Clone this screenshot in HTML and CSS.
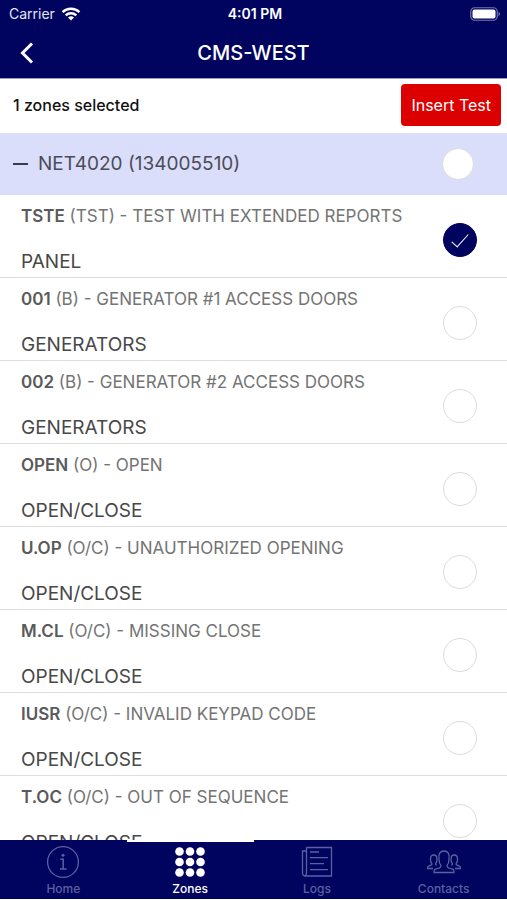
FILE: index.html
```html
<!DOCTYPE html>
<html lang="en">
<head>
<meta charset="utf-8">
<meta name="viewport" content="width=device-width, initial-scale=1">
<title>CMS-WEST</title>
<link rel="stylesheet" href="styles.css">
</head>
<body>
<div class="app">
  <header class="header">
    <div class="status">
      <div class="carrier"><span>Carrier</span>
        <svg width="20" height="14" viewBox="0 0 20 14" fill="none" stroke="#fff" stroke-width="2.4"><path d="M1.6 5.2a12 12 0 0 1 16.8 0M4.7 8.4a7.6 7.6 0 0 1 10.6 0"/><path d="M10 13.6l-3-3a4.3 4.3 0 0 1 6 0z" fill="#fff" stroke="none"/></svg>
      </div>
      <span class="time">4:01 PM</span>
      <svg class="battery" width="31" height="14" viewBox="0 0 31 14"><rect x=".75" y=".75" width="26.5" height="12.5" rx="4" fill="none" stroke="#7476ad" stroke-width="1.2"/><rect x="2.5" y="2.5" width="23" height="9" rx="2" fill="#fff"/><path d="M28.5 5v4q1.6-.6 1.6-2t-1.6-2z" fill="#7476ad"/></svg>
    </div>
    <div class="titlebar">
      <button class="back" type="button" aria-label="Back"><svg width="14" height="22" viewBox="0 0 14 22" fill="none" stroke="#fff" stroke-width="3"><path d="M12 1.5L2.5 11 12 20.5"/></svg></button>
      <h1>CMS-WEST</h1>
    </div>
  </header>
  <div class="toolbar">
    <span>1 zones selected</span>
    <button class="insert" type="button">Insert Test</button>
  </div>
  <main class="list">
    <div class="group">
      <span class="minus"></span>
      <label for="g">NET4020 (134005510)</label>
      <input type="checkbox" id="g">
    </div>
    <ul class="zones">
      <li><label for="z1"><span class="name"><b>TSTE</b> (TST) - TEST WITH EXTENDED REPORTS</span><span class="area">PANEL</span></label><input type="checkbox" id="z1" checked></li>
      <li><label for="z2"><span class="name"><b>001</b> (B) - GENERATOR #1 ACCESS DOORS</span><span class="area">GENERATORS</span></label><input type="checkbox" id="z2"></li>
      <li><label for="z3"><span class="name"><b>002</b> (B) - GENERATOR #2 ACCESS DOORS</span><span class="area">GENERATORS</span></label><input type="checkbox" id="z3"></li>
      <li><label for="z4"><span class="name"><b>OPEN</b> (O) - OPEN</span><span class="area">OPEN/CLOSE</span></label><input type="checkbox" id="z4"></li>
      <li><label for="z5"><span class="name"><b>U.OP</b> (O/C) - UNAUTHORIZED OPENING</span><span class="area">OPEN/CLOSE</span></label><input type="checkbox" id="z5"></li>
      <li><label for="z6"><span class="name"><b>M.CL</b> (O/C) - MISSING CLOSE</span><span class="area">OPEN/CLOSE</span></label><input type="checkbox" id="z6"></li>
      <li><label for="z7"><span class="name"><b>IUSR</b> (O/C) - INVALID KEYPAD CODE</span><span class="area">OPEN/CLOSE</span></label><input type="checkbox" id="z7"></li>
      <li><label for="z8"><span class="name"><b>T.OC</b> (O/C) - OUT OF SEQUENCE</span><span class="area">OPEN/CLOSE</span></label><input type="checkbox" id="z8"></li>
    </ul>
  </main>
  <nav class="tabs">
    <a href="#home"><svg width="34" height="34" viewBox="0 0 34 34" fill="none" stroke="currentColor" stroke-width="1.3"><circle cx="17" cy="17" r="15.4"/><path d="M14.3 14.3h2.900v9.400M14 24h6.500" stroke-width="1.5"/><circle cx="17" cy="10.300" r="1.500" fill="currentColor" stroke="none"/></svg><span>Home</span></a>
    <a href="#zones" class="active"><svg width="34" height="34" viewBox="0 0 34 34" fill="currentColor"><circle cx="6.500" cy="6.500" r="4.300"/><circle cx="17" cy="6.500" r="4.300"/><circle cx="27.500" cy="6.500" r="4.300"/><circle cx="6.500" cy="17" r="4.300"/><circle cx="17" cy="17" r="4.300"/><circle cx="27.500" cy="17" r="4.300"/><circle cx="6.500" cy="27.500" r="4.300"/><circle cx="17" cy="27.500" r="4.300"/><circle cx="27.500" cy="27.500" r="4.300"/></svg><span>Zones</span></a>
    <a href="#logs"><svg width="34" height="34" viewBox="0 0 34 34" fill="none" stroke="currentColor" stroke-width="1.3"><path d="M6.500 2.500h25v28.500h-26q-3 0-3-3V6h4M6.500 2.500v25q0 3-2 3.300M10 7h9M10 12.700h18M10 18.700h14M10 24.700h18"/></svg><span>Logs</span></a>
    <a href="#contacts"><svg width="36" height="34" viewBox="0 0 36 34" fill="none" stroke="currentColor" stroke-width="1.3" stroke-linejoin="round"><path d="M8 27.500v-1.500q0-1.500 2-2l3.500-1.200q1.500-.6 1.500-2.300c-1.500-1.500-2-3.500-2-6.500-.7-5 1-8 5-8s5.700 3 5 8c0 3-.5 5-2 6.500q0 1.700 1.500 2.300l3.500 1.200q2 .5 2 2v1.500z"/><path d="M7 23.500H1.500q0-2 1.500-2.600l2.500-1q.7-.5.300-1.400c-1.300-1-1.500-2.500-1.300-4.500 0-2.700 1-4 3.200-4s3.300 1.300 3.300 4c.2 2 0 3.500-1.300 4.500q-.4 1.400 1 1.900M29 23.500h5.500q0-2-1.500-2.600l-2.500-1q-.7-.5-.3-1.400c1.300-1 1.500-2.500 1.300-4.500 0-2.700-1-4-3.200-4s-3.300 1.300-3.300 4c-.2 2 0 3.500 1.300 4.500q.4 1.400-1 1.900"/></svg><span>Contacts</span></a>
  </nav>
</div>
</body>
</html>
```
FILE: styles.css
```css
* { box-sizing: border-box; }
body { margin: 0; font-family: Inter, sans-serif; background: #fff; color: #111; }
button { font: inherit; border: 0; cursor: pointer; }
.app { height: 100vh; display: flex; flex-direction: column; padding-bottom: 1px; }
.header { flex: none; background: #00045f; color: #fff; border-bottom: 1px solid #9a9bc4; }
.status { display: grid; grid-template-columns: 1fr auto 1fr; align-items: center; height: 27px; padding: 0 6px 0 9px; font-size: 14px; }
.carrier { display: flex; align-items: center; gap: 6px; color: #e4e4f2; }
.time { font-weight: 600; }
.battery { justify-self: end; }
.titlebar { display: grid; grid-template-columns: 54px 1fr 54px; align-items: center; height: 51px; }
.back { background: none; padding: 0; display: flex; justify-content: center; }
.titlebar h1 { margin: 0; text-align: center; font-size: 20px; font-weight: 500; }
.toolbar { flex: none; height: 54px; display: flex; align-items: center; justify-content: space-between; padding: 0 6px 2px 13px; font-size: 16px; font-weight: 500; }
.insert { height: 42px; padding: 0 10px; background: #dc0000; color: #fff; border-radius: 4px; font-weight: 400; }
.list { flex: 1; min-height: 0; overflow: hidden; }
.group { height: 62px; display: flex; align-items: center; background: #dadefb; padding: 0 33px 0 13px; color: #4c4c55; font-size: 19px; border-bottom: 1px solid #d9dbe6; }
.group label { flex: 1; }
.group input { width: 32px; height: 32px; }
.minus { width: 15px; height: 2px; background: #3c3c44; margin-right: 10px; }
input { appearance: none; flex: none; margin: 0; width: 34px; height: 34px; border: 1px solid #dcdcdc; border-radius: 50%; background: #fff; }
input:checked { border-color: #00045f; background: #00045f; display: grid; place-items: center; }
input:checked::before { content: ""; width: 7px; height: 16px; border: solid #fff; border-width: 0 1px 1px 0; transform: translateY(-2px) rotate(42deg); }
.zones { list-style: none; margin: 0; padding: 0; }
.zones li { height: 83px; display: flex; align-items: center; padding: 6px 30px 0 21px; border-bottom: 1px solid #dedede; }
.zones li > input { margin-top: 2px; }
.zones label { flex: 1; display: flex; flex-direction: column; gap: 22px; }
.name { font-size: 17px; line-height: 24px; color: #747474; }
.name b { font-weight: 600; color: #5a5a5a; }
.area { font-size: 19px; line-height: 24px; color: #484848; }
.tabs { flex: none; height: 59px; display: grid; grid-template-columns: repeat(4, 1fr); background: #00045f; }
.tabs a { display: flex; flex-direction: column; align-items: center; padding-top: 3px; border-top: 2px solid transparent; color: #5c60a0; text-decoration: none; font-size: 12px; font-weight: 500; line-height: 20px; }
.tabs .active { color: #fff; border-color: #fff; }
```
